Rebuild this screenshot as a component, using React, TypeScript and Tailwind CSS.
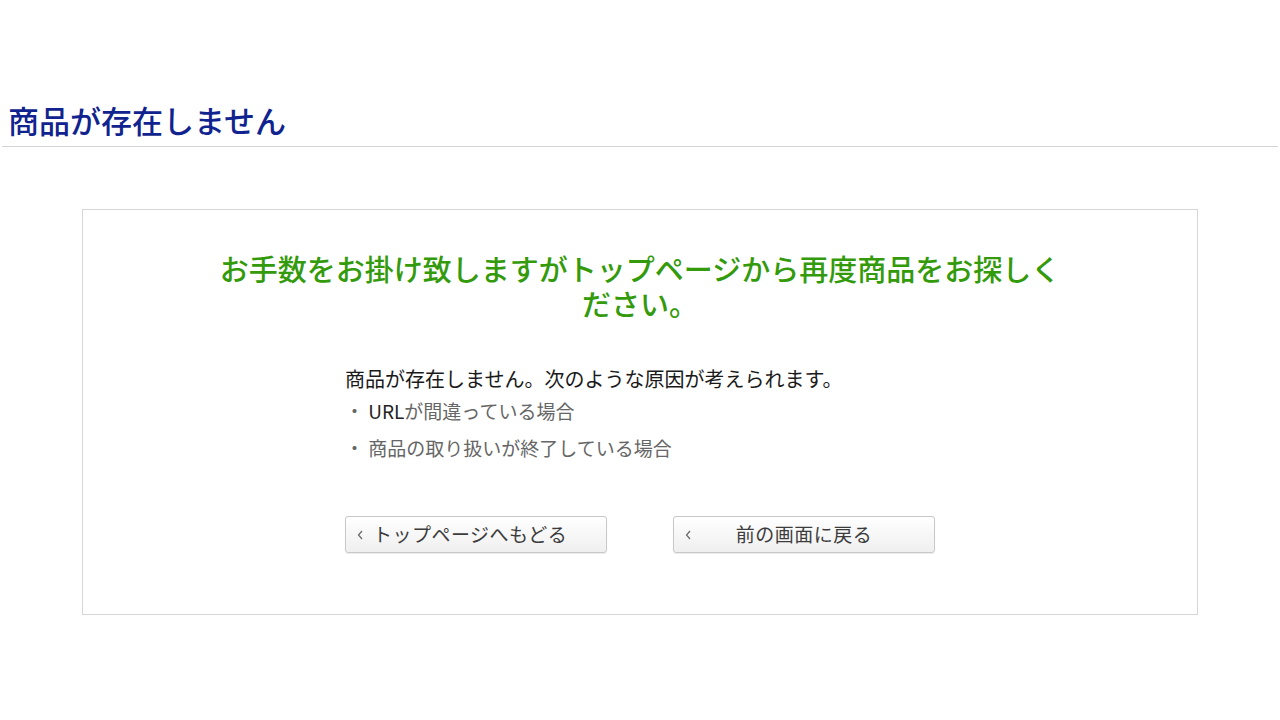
const jp = "font-['Meiryo','Noto_Sans_CJK_JP',sans-serif]";

type BackButtonProps = {
    label: string;
    centered?: boolean;
};

function BackButton({ label, centered }: BackButtonProps) {
    return (
        <button
            className={`flex items-center h-[37px] w-[262px] rounded-[3px] border border-[#c8c8c8] bg-gradient-to-b from-white to-[#efefef] shadow-[0_1px_1px_rgba(0,0,0,0.08)] text-[#3c3c3c] ${jp}`}
        >
            <span className="w-[27px] flex justify-center">
                <svg width="6" height="10" viewBox="0 0 6 10" fill="none">
                    <polyline
                        points="5,1 1.5,5 5,9"
                        stroke="#666"
                        strokeWidth="1.2"
                    />
                </svg>
            </span>
            <span
                className={`text-[19px] tracking-[0.5px] ${
                    centered ? "flex-1 text-center pr-[27px]" : ""
                }`}
            >
                {label}
            </span>
        </button>
    );
}

export default function App() {
    return (
        <div className={`w-[1280px] h-[720px] bg-white ${jp}`}>
            <div className="pt-[100px] px-[2px]">
                <h1 className="pl-[6px] h-[46px] text-[31px] leading-[40px] font-medium text-[#10238e]">
                    商品が存在しません
                </h1>
                <div className="h-px bg-[#d4d4d4]" />
            </div>

            <div className="mt-[62px] mx-[82px] h-[406px] border border-[#d6d6d6]">
                <p className="mx-auto mt-[41px] w-[850px] text-center text-[29px] leading-[35px] font-medium text-[#339a0c]">
                    お手数をお掛け致しますがトップページから再度商品をお探しください。
                </p>

                <div className="mx-auto mt-[45px] w-[590px]">
                    <p className="text-[20px] leading-[26px] text-[#1a1a1a]">
                        商品が存在しません。次のような原因が考えられます。
                    </p>
                    <ul className="mt-[5px] text-[19px] text-[#666]">
                        <li className="h-[37px] leading-[28px]">
                            ・ <span className="text-[#222]">URL</span>
                            が間違っている場合
                        </li>
                        <li className="leading-[28px]">
                            ・ 商品の取り扱いが終了している場合
                        </li>
                    </ul>

                    <div className="mt-[54px] flex justify-between">
                        <BackButton label="トップページへもどる" />
                        <BackButton label="前の画面に戻る" centered />
                    </div>
                </div>
            </div>
        </div>
    );
}
